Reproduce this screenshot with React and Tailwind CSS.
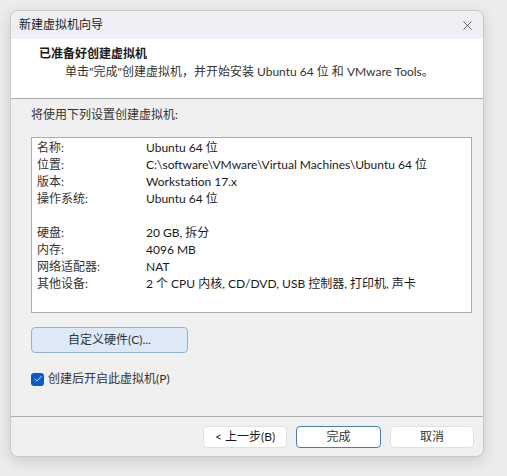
import { X, Check } from 'lucide-react';

const font = { fontFamily: 'Lato, "Noto Sans CJK SC", sans-serif' };

const rows = [
  ['名称:', 'Ubuntu 64 位'],
  ['位置:', 'C:\\software\\VMware\\Virtual Machines\\Ubuntu 64 位'],
  ['版本:', 'Workstation 17.x'],
  ['操作系统:', 'Ubuntu 64 位'],
  null,
  ['硬盘:', '20 GB, 拆分'],
  ['内存:', '4096 MB'],
  ['网络适配器:', 'NAT'],
  ['其他设备:', '2 个 CPU 内核, CD/DVD, USB 控制器, 打印机, 声卡'],
];

export default function App() {
  return (
    <div className="w-[507px] h-[476px] bg-[#ececec] pt-[10px] pl-[10px] text-[#1a1a1a]" style={font}>
      <div className="w-[474px] h-[447px] rounded-[8px] bg-[#f0f0f0] border border-[#c9c9c9] shadow-[0_4px_14px_rgba(0,0,0,0.14)] flex flex-col overflow-hidden">
        <div className="h-[28px] shrink-0 bg-[#eef0f6] flex items-center justify-between pl-[8px] pr-[8px]">
          <span className="text-[12px]">新建虚拟机向导</span>
          <X size={15} strokeWidth={1.2} className="text-[#333]" />
        </div>
        <div className="h-[60px] shrink-0 bg-white border-b border-[#a9a9a9] pl-[28px] pt-[6px]">
          <div className="text-[12px] font-bold leading-[18px]">已准备好创建虚拟机</div>
          <div className="text-[12px] leading-[18px] pl-[26px] text-[#333]">单击"完成"创建虚拟机，并开始安装 Ubuntu 64 位 和 VMware Tools。</div>
        </div>
        <div className="flex-1 flex flex-col pl-[20px] pr-[11px]">
          <div className="text-[12px] mt-[7px] leading-[17px] text-[#333]">将使用下列设置创建虚拟机:</div>
          <div className="mt-[14px] h-[176px] bg-white border border-[#adadad] pl-[5px] pt-[1px]">
            {rows.map((r, i) =>
              r ? (
                <div key={i} className="flex text-[12px] leading-[17px]">
                  <span className="w-[109px] shrink-0 text-[#333]">{r[0]}</span>
                  <span>{r[1]}</span>
                </div>
              ) : (
                <div key={i} className="h-[17px]" />
              )
            )}
          </div>
          <button className="mt-[14px] w-[157px] h-[26px] rounded-[4px] bg-[#dde9f7] border border-[#8eb2d6] text-[12px] text-[#333]">
            自定义硬件(C)...
          </button>
          <label className="mt-[17px] flex items-center gap-[4px] text-[12px] text-[#333]">
            <span className="w-[13px] h-[13px] rounded-[3px] bg-[#0b5cc1] flex items-center justify-center">
              <Check size={10} strokeWidth={2} className="text-white" />
            </span>
            创建后开启此虚拟机(P)
          </label>
        </div>
        <div className="h-[40px] shrink-0 border-t border-[#ababab] flex items-start justify-end gap-[9px] pt-[9px] pr-[9px]">
          <button className="w-[84px] h-[22px] rounded-[4px] bg-white border border-[#e0e0e0] text-[12px]">&lt; 上一步(B)</button>
          <button className="w-[85px] h-[22px] rounded-[4px] bg-white border border-[#4a7fa8] text-[12px] text-[#333]">完成</button>
          <button className="w-[84px] h-[22px] rounded-[4px] bg-white border border-[#e0e0e0] text-[12px] text-[#333]">取消</button>
        </div>
      </div>
    </div>
  );
}
